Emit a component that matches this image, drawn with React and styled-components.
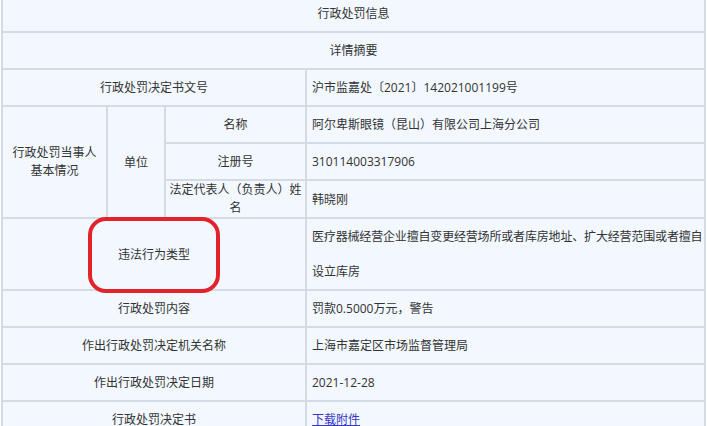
import React from 'react'
import styled, { createGlobalStyle } from 'styled-components'

const GlobalStyle = createGlobalStyle`
  html, body {
    margin: 0;
    padding: 0;
    background: #ffffff;
    overflow: hidden;
  }
  body {
    font-family: "Open Sans", "Noto Sans CJK SC", sans-serif;
    font-size: 12px;
    color: #333333;
  }
`

const Page = styled.div`
  width: 707px;
  height: 426px;
  overflow: hidden;
`

const Table = styled.table`
  width: 705px;
  margin: -6px 0 0 1px;
  border-collapse: collapse;
  table-layout: fixed;
`

const Cell = styled.td`
  border: 2px solid #d3dce4;
  background: #f2f8fe;
  padding: 0;
  padding-left: ${({ $align }) => ($align === 'left' ? '5px' : '0')};
  text-align: ${({ $align }) => $align || 'center'};
  vertical-align: middle;
  line-height: ${({ $tight }) => ($tight ? '18px' : '35px')};
  white-space: normal;
  word-break: break-all;
`

const Line = styled.span`
  white-space: nowrap;
  letter-spacing: -0.17px;
`

const Marked = styled.span`
  position: relative;
  display: inline-block;
  line-height: 18px;

  &::after {
    content: '';
    position: absolute;
    top: -29px;
    bottom: -29px;
    left: -30px;
    right: -30px;
    border: 4px solid #e2232b;
    border-radius: 18px;
  }
`

const Link = styled.a`
  color: #3535c8;
  text-decoration: underline;
`

const rows = [
  { label: '行政处罚内容', value: '罚款0.5000万元，警告' },
  { label: '作出行政处罚决定机关名称', value: '上海市嘉定区市场监督管理局' },
  { label: '作出行政处罚决定日期', value: '2021-12-28' },
]

const App = () => (
  <Page>
    <GlobalStyle />
    <Table>
      <colgroup>
        <col style={{ width: 105 }} />
        <col style={{ width: 58 }} />
        <col style={{ width: 141 }} />
        <col />
      </colgroup>
      <tbody>
        <tr>
          <Cell colSpan={4}>行政处罚信息</Cell>
        </tr>
        <tr>
          <Cell colSpan={4}>详情摘要</Cell>
        </tr>
        <tr>
          <Cell colSpan={3}>行政处罚决定书文号</Cell>
          <Cell $align="left">沪市监嘉处〔2021〕142021001199号</Cell>
        </tr>
        <tr>
          <Cell rowSpan={3} $tight>
            行政处罚当事人
            <br />
            基本情况
          </Cell>
          <Cell rowSpan={3}>单位</Cell>
          <Cell>名称</Cell>
          <Cell $align="left">阿尔卑斯眼镜（昆山）有限公司上海分公司</Cell>
        </tr>
        <tr>
          <Cell>注册号</Cell>
          <Cell $align="left">310114003317906</Cell>
        </tr>
        <tr>
          <Cell $tight>法定代表人（负责人）姓名</Cell>
          <Cell $align="left">韩晓刚</Cell>
        </tr>
        <tr>
          <Cell colSpan={3}>
            <Marked>违法行为类型</Marked>
          </Cell>
          <Cell $align="left">
            <Line>医疗器械经营企业擅自变更经营场所或者库房地址、扩大经营范围或者擅自</Line>
            <br />
            设立库房
          </Cell>
        </tr>
        {rows.map(({ label, value }) => (
          <tr key={label}>
            <Cell colSpan={3}>{label}</Cell>
            <Cell $align="left">{value}</Cell>
          </tr>
        ))}
        <tr>
          <Cell colSpan={3}>行政处罚决定书</Cell>
          <Cell $align="left">
            <Link href="#">下载附件</Link>
          </Cell>
        </tr>
      </tbody>
    </Table>
  </Page>
)

export default App
